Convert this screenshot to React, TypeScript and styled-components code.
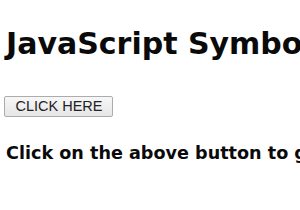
import React from 'react';
import styled, { createGlobalStyle } from 'styled-components';

const GlobalStyle = createGlobalStyle`
    html, body {
        margin: 0;
        padding: 0;
        background: #fff;
        overflow: hidden;
    }
`;

const Page = styled.div`
    width: 300px;
    overflow: hidden;
    padding: 0 0 0 6px;
    box-sizing: border-box;
    color: #000;
    white-space: nowrap;
    font-family: "DejaVu Sans", "Open Sans", sans-serif;
`;

const Title = styled.h1`
    margin: 0;
    padding-top: 26px;
    font-size: 30px;
    line-height: 35px;
    font-weight: 700;
    color: #0a0a0a;
`;

const ClickButton = styled.button`
    display: block;
    margin: 35px 0 0 -2px;
    width: 109px;
    height: 21px;
    padding: 0 0 0 1px;
    font-family: "Liberation Sans", Arial, sans-serif;
    font-size: 14.5px;
    line-height: 19px;
    color: #222;
    background: linear-gradient(#f7f7f7, #e6e6e6);
    border: 1px solid #acacac;
    border-radius: 2px;
`;

const Message = styled.h3`
    margin: 24px 0 0;
    font-size: 17.6px;
    line-height: 24px;
    font-weight: 700;
    color: #0a0a0a;
`;

const App: React.FC = () => {
    return (
        <>
            <GlobalStyle />
            <Page>
                <Title>JavaScript Symbol</Title>
                <ClickButton>CLICK HERE</ClickButton>
                <Message>Click on the above button to get the result</Message>
            </Page>
        </>
    );
};

export default App;
